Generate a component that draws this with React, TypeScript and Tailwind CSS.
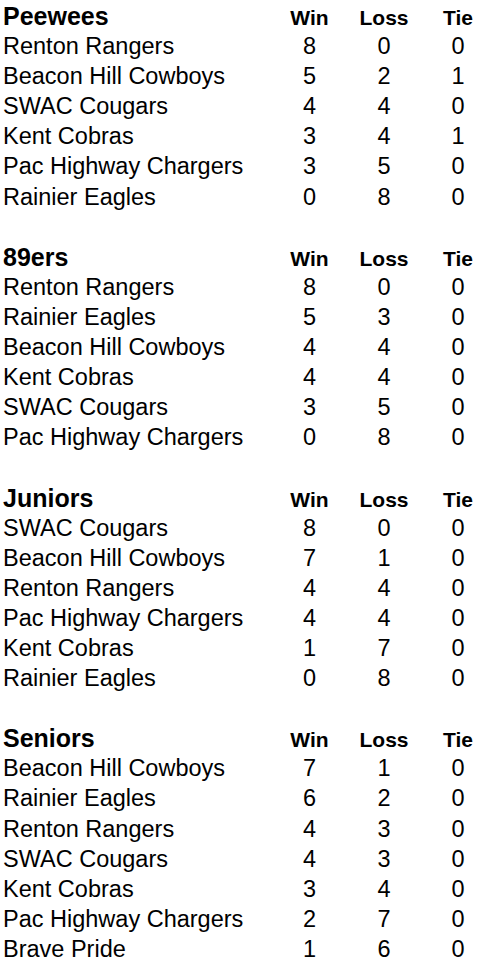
const divisions = [
  {
    name: "Peewees",
    teams: [
      ["Renton Rangers", 8, 0, 0],
      ["Beacon Hill Cowboys", 5, 2, 1],
      ["SWAC Cougars", 4, 4, 0],
      ["Kent Cobras", 3, 4, 1],
      ["Pac Highway Chargers", 3, 5, 0],
      ["Rainier Eagles", 0, 8, 0],
    ],
  },
  {
    name: "89ers",
    teams: [
      ["Renton Rangers", 8, 0, 0],
      ["Rainier Eagles", 5, 3, 0],
      ["Beacon Hill Cowboys", 4, 4, 0],
      ["Kent Cobras", 4, 4, 0],
      ["SWAC Cougars", 3, 5, 0],
      ["Pac Highway Chargers", 0, 8, 0],
    ],
  },
  {
    name: "Juniors",
    teams: [
      ["SWAC Cougars", 8, 0, 0],
      ["Beacon Hill Cowboys", 7, 1, 0],
      ["Renton Rangers", 4, 4, 0],
      ["Pac Highway Chargers", 4, 4, 0],
      ["Kent Cobras", 1, 7, 0],
      ["Rainier Eagles", 0, 8, 0],
    ],
  },
  {
    name: "Seniors",
    teams: [
      ["Beacon Hill Cowboys", 7, 1, 0],
      ["Rainier Eagles", 6, 2, 0],
      ["Renton Rangers", 4, 3, 0],
      ["SWAC Cougars", 4, 3, 0],
      ["Kent Cobras", 3, 4, 0],
      ["Pac Highway Chargers", 2, 7, 0],
      ["Brave Pride", 1, 6, 0],
    ],
  },
];

export default function App() {
  return (
    <div className="min-h-screen w-[500px] bg-white pt-px pl-[3px] pr-[5px] text-black font-['Liberation_Sans',Arial,sans-serif]">
      {divisions.map((division) => (
        <section key={division.name} className="mb-[30.1px]">
          {/* Division heading */}
          <div className="grid grid-cols-[1fr_75px_74px_74px] items-baseline h-[30.1px] leading-[30.1px]">
            <h2 className="text-[25px] font-bold">{division.name}</h2>
            <span className="text-center text-[21px] font-bold">Win</span>
            <span className="text-center text-[21px] font-bold">Loss</span>
            <span className="text-center text-[21px] font-bold">Tie</span>
          </div>

          {division.teams.map((team, i) => (
            <div
              key={i}
              className="grid grid-cols-[1fr_75px_74px_74px] h-[30.1px] leading-[30.1px] text-[23.5px]"
            >
              <span className="whitespace-nowrap">{team[0]}</span>
              <span className="text-center">{team[1]}</span>
              <span className="text-center">{team[2]}</span>
              <span className="text-center">{team[3]}</span>
            </div>
          ))}
        </section>
      ))}
    </div>
  );
}
